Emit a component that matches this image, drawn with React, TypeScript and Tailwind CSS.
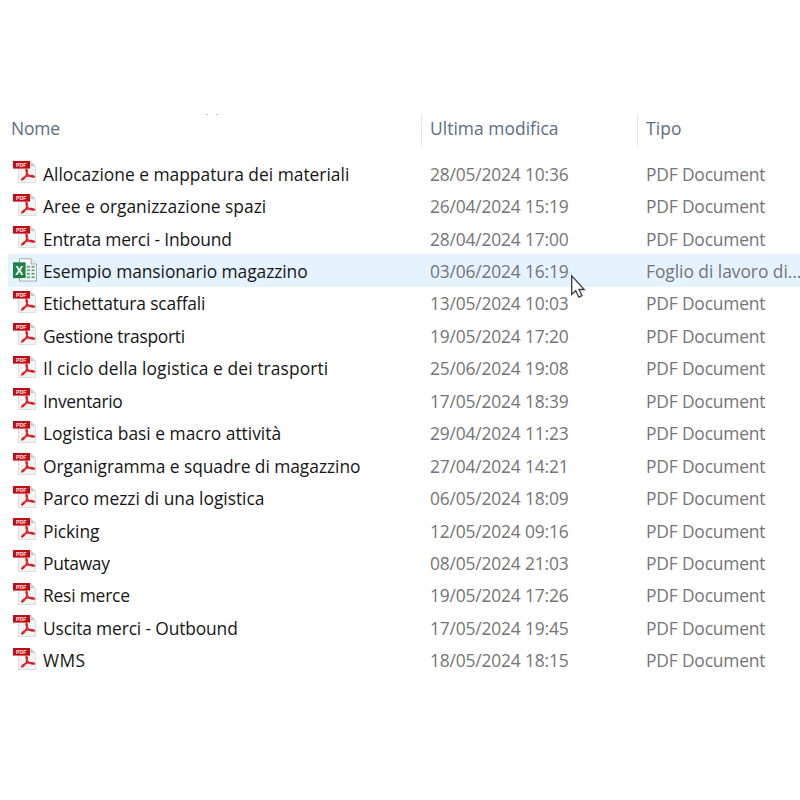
import React from 'react';

type FileRow = {
  name: string;
  modified: string;
  kind: 'pdf' | 'excel';
  tracking: string;
};

const files: FileRow[] = [
  { name: 'Allocazione e mappatura dei materiali', modified: '28/05/2024 10:36', kind: 'pdf', tracking: 'tracking-normal' },
  { name: 'Aree e organizzazione spazi', modified: '26/04/2024 15:19', kind: 'pdf', tracking: 'tracking-normal' },
  { name: 'Entrata merci - Inbound', modified: '28/04/2024 17:00', kind: 'pdf', tracking: 'tracking-[-0.17px]' },
  { name: 'Esempio mansionario magazzino', modified: '03/06/2024 16:19', kind: 'excel', tracking: 'tracking-[-0.08px]' },
  { name: 'Etichettatura scaffali', modified: '13/05/2024 10:03', kind: 'pdf', tracking: 'tracking-[-0.15px]' },
  { name: 'Gestione trasporti', modified: '19/05/2024 17:20', kind: 'pdf', tracking: 'tracking-[-0.27px]' },
  { name: 'Il ciclo della logistica e dei trasporti', modified: '25/06/2024 19:08', kind: 'pdf', tracking: 'tracking-[0.1px]' },
  { name: 'Inventario', modified: '17/05/2024 18:39', kind: 'pdf', tracking: 'tracking-[-0.3px]' },
  { name: 'Logistica basi e macro attività', modified: '29/04/2024 11:23', kind: 'pdf', tracking: 'tracking-normal' },
  { name: 'Organigramma e squadre di magazzino', modified: '27/04/2024 14:21', kind: 'pdf', tracking: 'tracking-[-0.05px]' },
  { name: 'Parco mezzi di una logistica', modified: '06/05/2024 18:09', kind: 'pdf', tracking: 'tracking-[-0.03px]' },
  { name: 'Picking', modified: '12/05/2024 09:16', kind: 'pdf', tracking: 'tracking-[-0.05px]' },
  { name: 'Putaway', modified: '08/05/2024 21:03', kind: 'pdf', tracking: 'tracking-[-0.33px]' },
  { name: 'Resi merce', modified: '19/05/2024 17:26', kind: 'pdf', tracking: 'tracking-[-0.2px]' },
  { name: 'Uscita merci - Outbound', modified: '17/05/2024 19:45', kind: 'pdf', tracking: 'tracking-[-0.14px]' },
  { name: 'WMS', modified: '18/05/2024 18:15', kind: 'pdf', tracking: 'tracking-[0.4px]' },
];

function PdfIcon() {
  return (
    <svg className="mb-[2px] h-6 w-6 shrink-0" viewBox="0 0 24 24" fill="none">
      <path d="M5.5 1h12l5 5v16.5h-17z" fill="#f3f3f3" />
      <path d="M5.5 8.5v14h17V6" stroke="#d6d6d6" strokeWidth="0.8" />
      <path d="M17.5 1v5h5z" fill="#c9c9c9" />
      <rect y="1" width="17" height="7.6" fill="#c00d14" />
      <text
        x="3"
        y="7"
        textLength="10.4"
        lengthAdjust="spacingAndGlyphs"
        className="font-['Liberation_Sans',sans-serif] text-[5.8px] font-bold"
        fill="#fdeaea"
      >
        PDF
      </text>
      <path
        d="M13.2 9.2c-.4 2.6.9 5.3 3.4 6.8 1.7 1 3.8 1.2 4.9.7-.9-1.3-4.3-1.3-7-.6-2.7.6-5.2 2-5.8 3.8 1.9.3 4.4-3.8 5.3-6.6.5-1.8.2-3.5-.8-4.1z"
        stroke="#d92228"
        strokeWidth="1.5"
        strokeLinejoin="round"
      />
    </svg>
  );
}

function ExcelIcon() {
  return (
    <svg className="mb-[2px] h-6 w-6 shrink-0" viewBox="0 0 24 24" fill="none">
      <path d="M6.5 .8h11.5l5.4 5.2v17h-16.9z" fill="#fff" stroke="#8d9690" strokeWidth="0.8" />
      <path d="M18 .8v5.2h5.4" fill="#eee" stroke="#8d9690" strokeWidth="0.8" />
      <path
        d="M13.8 8.8h3.2M18.4 8.8h3.2M13.8 12.3h3.2M18.4 12.3h3.2M13.8 15.8h3.2M18.4 15.8h3.2M13.8 19.3h3.2M18.4 19.3h3.2"
        stroke="#5fa981"
        strokeWidth="2"
      />
      <rect y="4.3" width="12.6" height="15.8" fill="#1f8048" />
      <text
        x="6.3"
        y="16.5"
        textAnchor="middle"
        className="font-['Liberation_Sans',sans-serif] text-[12px] font-bold"
        fill="#fff"
      >
        X
      </text>
    </svg>
  );
}

function Cursor() {
  return (
    <svg className="absolute top-[274px] left-[570px] h-[26px] w-[17px]" viewBox="0 0 17 26">
      <path
        d="M1.7 1.8v18.6l4-3.8 3.1 6.6 3.2-1.5-3-6.2h5.3z"
        fill="#fff"
        stroke="#3a3a48"
        strokeWidth="1.3"
      />
    </svg>
  );
}

export default function App() {
  return (
    <main className="relative h-[800px] w-[800px] overflow-hidden bg-white pt-[114px] font-['Open_Sans',sans-serif] text-[17.4px] leading-8 whitespace-nowrap text-[#757575]">
      {/* Descenders of the line cut off above the list */}
      <div className="absolute top-[114px] left-[206px] flex gap-[8px]">
        <span className="h-px w-[2px] bg-[#bbb]" />
        <span className="h-px w-[2px] bg-[#bbb]" />
      </div>

      {/* Column headings */}
      <div className="mb-[11px] flex h-8 text-[#5c6d83]">
        <span className="w-[421px] pl-[11px] leading-[29px] tracking-[-0.1px]">Nome</span>
        <span className="w-[216px] border-l border-[#e5e5e5] pl-2 leading-[29px] tracking-[0.05px]">Ultima modifica</span>
        <span className="border-l border-[#e5e5e5] pl-2 leading-[29px] tracking-[0.15px]">Tipo</span>
      </div>

      {files.map((file) => (
        <div
          key={file.name}
          className={`ml-2 flex h-[32.45px] items-center pl-[5px] ${file.kind === 'excel' ? 'bg-[#e5f3ff]' : ''}`}
        >
          {file.kind === 'excel' ? <ExcelIcon /> : <PdfIcon />}
          <span className={`ml-1.5 w-[387px] shrink-0 pt-[1px] text-[#161616] ${file.tracking}`}>{file.name}</span>
          <span className="w-[216px] shrink-0 pt-[1px] tracking-[-0.17px]">{file.modified}</span>
          {file.kind === 'excel' ? (
            <span className="pt-[1px] tracking-[-0.04px]">Foglio di lavoro di...</span>
          ) : (
            <span className="pt-[1px] tracking-[-0.17px]">PDF Document</span>
          )}
        </div>
      ))}

      <Cursor />
    </main>
  );
}
